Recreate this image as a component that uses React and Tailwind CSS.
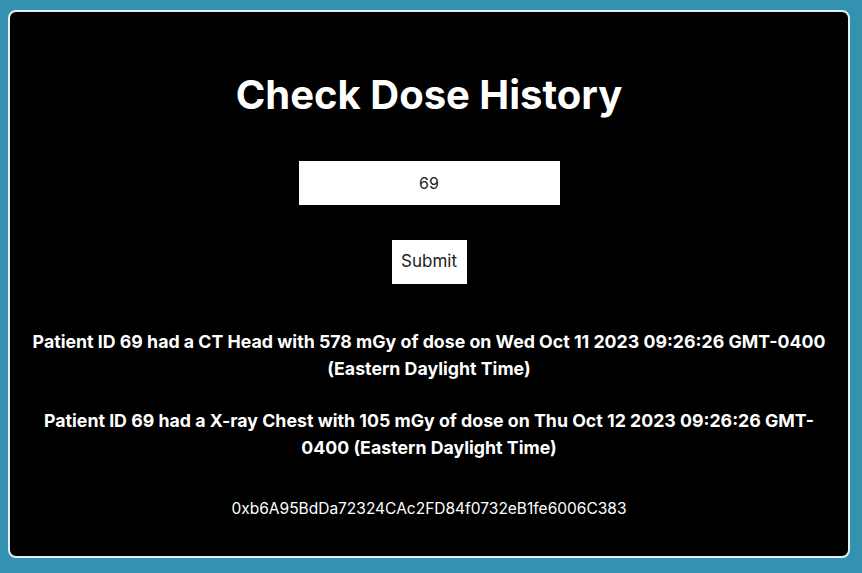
import React, { useState } from 'react';

const records = [
  'Patient ID 69 had a CT Head with 578 mGy of dose on Wed Oct 11 2023 09:26:26 GMT-0400 (Eastern Daylight Time)',
  'Patient ID 69 had a X-ray Chest with 105 mGy of dose on Thu Oct 12 2023 09:26:26 GMT-0400 (Eastern Daylight Time)',
];

export default function App() {
  const [patientId, setPatientId] = useState('69');

  return (
    <div
      className="min-h-screen w-full bg-[#3292b0] pt-[10px] pl-[8px]"
      style={{ fontFamily: "Inter, 'Noto Sans', sans-serif" }}
    >
      <div className="w-[842px] h-[548px] bg-black border-2 border-[#e6eef5] rounded-lg flex flex-col items-center px-[19px] text-white">
        <h1 className="mt-[58px] text-[40px] leading-[50px] font-bold">Check Dose History</h1>

        <input
          value={patientId}
          onChange={(e) => setPatientId(e.target.value)}
          className="mt-[41px] w-[261px] h-[44px] bg-white text-[#222] text-center text-[16px] outline-none"
        />

        <button className="mt-[35px] w-[75px] h-[44px] bg-white text-[#222] text-[17px]">Submit</button>

        <div className="mt-[44px] flex flex-col gap-[25px] w-full">
          {records.map((r, i) => (
            <p key={i} className="text-center font-bold text-[17.75px] leading-[27px]">{r}</p>
          ))}
        </div>

        <p className="mt-[38px] text-[15.5px] leading-[20px]">0xb6A95BdDa72324CAc2FD84f0732eB1fe6006C383</p>
      </div>
    </div>
  );
}
